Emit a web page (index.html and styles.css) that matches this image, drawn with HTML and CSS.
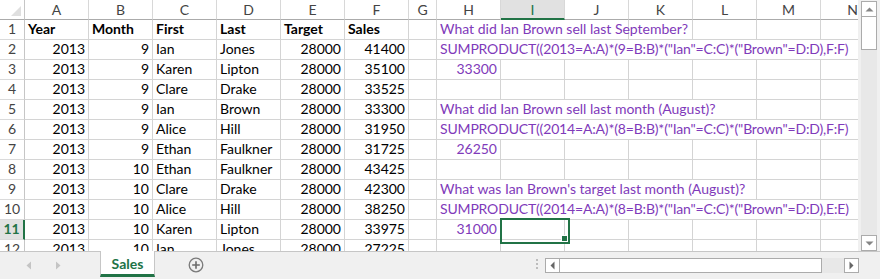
FILE: index.html
```html
<!DOCTYPE html>
<html>
<head>
<meta charset="utf-8">
<link rel="stylesheet" href="styles.css">
</head>
<body>
<div class="app">
  <div class="main">
    <div class="sheet">
      <div class="grid">
        <div class="corner"><span class="tri"></span></div>
        <div class="ch">A</div><div class="ch">B</div><div class="ch">C</div><div class="ch">D</div><div class="ch">E</div><div class="ch">F</div><div class="ch">G</div><div class="ch">H</div><div class="ch sel">I</div><div class="ch">J</div><div class="ch">K</div><div class="ch">L</div><div class="ch">M</div><div class="ch">N</div>

        <div class="rh">1</div><div class="c b">Year</div><div class="c b">Month</div><div class="c b">First</div><div class="c b">Last</div><div class="c b">Target</div><div class="c b">Sales</div><div class="c"></div>
        <div class="c p s3">What did Ian Brown sell last September?</div><div class="c"></div><div class="c"></div><div class="c"></div><div class="c"></div>

        <div class="rh">2</div><div class="c n">2013</div><div class="c n">9</div><div class="c">Ian</div><div class="c">Jones</div><div class="c n">28000</div><div class="c n">41400</div><div class="c"></div>
        <div class="c p f s7">SUMPRODUCT((2013=A:A)*(9=B:B)*("Ian"=C:C)*("Brown"=D:D),F:F)</div>

        <div class="rh">3</div><div class="c n">2013</div><div class="c n">9</div><div class="c">Karen</div><div class="c">Lipton</div><div class="c n">28000</div><div class="c n">35100</div><div class="c"></div>
        <div class="c p n">33300</div><div class="c"></div><div class="c"></div><div class="c"></div><div class="c"></div><div class="c"></div><div class="c"></div>

        <div class="rh">4</div><div class="c n">2013</div><div class="c n">9</div><div class="c">Clare</div><div class="c">Drake</div><div class="c n">28000</div><div class="c n">33525</div><div class="c"></div>
        <div class="c"></div><div class="c"></div><div class="c"></div><div class="c"></div><div class="c"></div><div class="c"></div><div class="c"></div>

        <div class="rh">5</div><div class="c n">2013</div><div class="c n">9</div><div class="c">Ian</div><div class="c">Brown</div><div class="c n">28000</div><div class="c n">33300</div><div class="c"></div>
        <div class="c p s5">What did Ian Brown sell last month (August)?</div><div class="c"></div><div class="c"></div>

        <div class="rh">6</div><div class="c n">2013</div><div class="c n">9</div><div class="c">Alice</div><div class="c">Hill</div><div class="c n">28000</div><div class="c n">31950</div><div class="c"></div>
        <div class="c p f s7">SUMPRODUCT((2014=A:A)*(8=B:B)*("Ian"=C:C)*("Brown"=D:D),F:F)</div>

        <div class="rh">7</div><div class="c n">2013</div><div class="c n">9</div><div class="c">Ethan</div><div class="c">Faulkner</div><div class="c n">28000</div><div class="c n">31725</div><div class="c"></div>
        <div class="c p n">26250</div><div class="c"></div><div class="c"></div><div class="c"></div><div class="c"></div><div class="c"></div><div class="c"></div>

        <div class="rh">8</div><div class="c n">2013</div><div class="c n">10</div><div class="c">Ethan</div><div class="c">Faulkner</div><div class="c n">28000</div><div class="c n">43425</div><div class="c"></div>
        <div class="c"></div><div class="c"></div><div class="c"></div><div class="c"></div><div class="c"></div><div class="c"></div><div class="c"></div>

        <div class="rh">9</div><div class="c n">2013</div><div class="c n">10</div><div class="c">Clare</div><div class="c">Drake</div><div class="c n">28000</div><div class="c n">42300</div><div class="c"></div>
        <div class="c p s5">What was Ian Brown's target last month (August)?</div><div class="c"></div><div class="c"></div>

        <div class="rh">10</div><div class="c n">2013</div><div class="c n">10</div><div class="c">Alice</div><div class="c">Hill</div><div class="c n">28000</div><div class="c n">38250</div><div class="c"></div>
        <div class="c p f s7">SUMPRODUCT((2014=A:A)*(8=B:B)*("Ian"=C:C)*("Brown"=D:D),E:E)</div>

        <div class="rh rsel">11</div><div class="c n">2013</div><div class="c n">10</div><div class="c">Karen</div><div class="c">Lipton</div><div class="c n">28000</div><div class="c n">33975</div><div class="c"></div>
        <div class="c p n">31000</div><div class="c active"></div><div class="c"></div><div class="c"></div><div class="c"></div><div class="c"></div><div class="c"></div>

        <div class="rh">12</div><div class="c n">2013</div><div class="c n">10</div><div class="c">Ian</div><div class="c">Jones</div><div class="c n">28000</div><div class="c n">27225</div><div class="c"></div>
        <div class="c"></div><div class="c"></div><div class="c"></div><div class="c"></div><div class="c"></div><div class="c"></div><div class="c"></div>
      </div>
    </div>
    <div class="vscroll">
      <div class="vbtn"><svg width="9" height="5" viewBox="0 0 9 5"><path d="M0.5 4.5 L4.5 0.5 L8.5 4.5 Z" fill="#858585"/></svg></div>
      <div class="vthumb"></div>
      <div class="vtrack"></div>
      <div class="vbtn"><svg width="9" height="5" viewBox="0 0 9 5"><path d="M0.5 0.5 L4.5 4.5 L8.5 0.5 Z" fill="#858585"/></svg></div>
    </div>
  </div>
  <div class="tabbar">
    <div class="nav">
      <svg width="6" height="9" viewBox="0 0 6 9"><path d="M5 0.5 L0.5 4.5 L5 8.5 Z" fill="#c4c4c4"/></svg>
      <svg width="6" height="9" viewBox="0 0 6 9"><path d="M1 0.5 L5.5 4.5 L1 8.5 Z" fill="#c4c4c4"/></svg>
    </div>
    <div class="tab">Sales</div>
    <div class="add"><svg width="16" height="16" viewBox="0 0 16 16"><circle cx="8" cy="8" r="6.8" fill="none" stroke="#7a7a7a" stroke-width="1.3"/><path d="M8 4.2 V11.8 M4.2 8 H11.8" stroke="#6a6a6a" stroke-width="1.6"/></svg></div>
    <div class="spacer"></div>
    <div class="dots"><i></i><i></i><i></i></div>
    <div class="hscroll">
      <div class="hbtn"><svg width="5" height="9" viewBox="0 0 5 9"><path d="M4.5 0.5 L0.5 4.5 L4.5 8.5 Z" fill="#666"/></svg></div>
      <div class="hthumb"></div>
      <div class="htrack"></div>
      <div class="hbtn"><svg width="5" height="9" viewBox="0 0 5 9"><path d="M0.5 0.5 L4.5 4.5 L0.5 8.5 Z" fill="#666"/></svg></div>
    </div>
    <div class="endpad"></div>
  </div>
</div>
</body>
</html>
```
FILE: styles.css
```css
* { box-sizing: border-box; }
html, body { margin: 0; padding: 0; background: #fff; }
body { font-family: Lato, "Open Sans", sans-serif; font-size: 14px; color: #000; }

.app { width: 880px; height: 279px; display: flex; flex-direction: column; overflow: hidden; }
.main { display: flex; height: 251px; }
.sheet { width: 858px; height: 251px; overflow: hidden; flex: none; }
.grid {
  display: grid;
  grid-template-columns: 25px repeat(6, 64px) 28px repeat(7, 64px);
  grid-auto-rows: 20px;
  width: 922px;
}
.corner { border-right: 1px solid #c6c6c6; border-bottom: 1px solid #ababab; position: relative; display: flex; align-items: flex-end; justify-content: flex-end; padding: 0 3px 3px 0; }
.tri { width: 0; height: 0; border-left: 10px solid transparent; border-bottom: 10px solid #dfdfdf; }
.ch {
  border-right: 1px solid #d8d8d8; border-bottom: 1px solid #ababab;
  display: flex; align-items: center; justify-content: center;
  color: #444; font-size: 14px; line-height: 19px; padding-bottom: 1px;
}
.ch.sel { background: #e1e1e1; color: #217346; border-bottom: 2px solid #217346; padding-bottom: 0; }
.rh {
  border-right: 1px solid #c6c6c6; border-bottom: 1px solid #dadada;
  display: flex; align-items: flex-end; justify-content: center;
  color: #444; font-size: 14px; line-height: 17px; padding-bottom: 2px;
}
.rh.rsel { background: #e1e1e1; color: #217346; font-weight: bold; border-right: 2px solid #217346; }
.c {
  border-right: 1px solid #d4d4d4; border-bottom: 1px solid #d4d4d4;
  display: flex; align-items: flex-end; white-space: nowrap;
  padding: 0 3px 2px 3px; line-height: 17px; overflow: visible;
}
.c.b { font-weight: bold; }
.c.n { justify-content: flex-end; }
.c.p { color: #7f3aba; }
.c.f { letter-spacing: -0.17px; }
.s3 { grid-column: span 3; }
.s5 { grid-column: span 5; }
.s7 { grid-column: span 7; }
.c.active { position: relative; }
.c.active::after {
  content: ""; position: absolute; left: -1px; top: -2px; width: 66px; height: 22px;
  border: 2px solid #217346;
}
.c.active::before {
  content: ""; position: absolute; right: -4px; bottom: -3px; width: 5px; height: 5px;
  background: #217346; border: 1px solid #fff; z-index: 2; box-sizing: content-box;
}

.vscroll { width: 22px; background: #f0f0f0; display: flex; flex-direction: column; padding: 1px 3px 0 3px; }
.vbtn { width: 16px; height: 16px; background: #fff; border: 1px solid #ababab; display: flex; align-items: center; justify-content: center; }
.vthumb { width: 16px; height: 33px; background: #fff; border: 1px solid #ababab; border-top: none; }
.vtrack { flex: 1; background: #e8e8e8; margin: 0; }

.tabbar { height: 28px; display: flex; background: #f0f0f0; border-top: 1px solid #c6c6c6; }
.nav { width: 100px; display: flex; align-items: center; gap: 23px; padding-left: 26px; padding-bottom: 1px; }
.tab {
  width: 55px; height: 26px; margin-top: -1px; background: #fff;
  border-left: 1px solid #c6c6c6; border-right: 1px solid #c6c6c6; border-bottom: 3px solid #217346;
  color: #217346; font-weight: bold; font-size: 14px;
  display: flex; align-items: center; justify-content: center; padding-top: 1px;
}
.add { width: 80px; display: flex; align-items: center; padding-left: 33px; padding-bottom: 2px; }
.spacer { flex: 1; }
.dots { width: 16px; display: flex; flex-direction: column; align-items: center; justify-content: center; gap: 2px; padding-bottom: 3px; margin-right: 0; }
.dots i { display: block; width: 2px; height: 2px; background: #bdbdbd; }
.hscroll { width: 314px; height: 15px; margin-top: 6px; display: flex; }
.hbtn { width: 15px; height: 15px; background: #fff; border: 1px solid #ababab; display: flex; align-items: center; justify-content: center; }
.hthumb { width: 262px; height: 15px; background: #fff; border: 1px solid #ababab; border-left: none; }
.htrack { flex: 1; background: #e8e8e8; }
.endpad { width: 21px; }
```
